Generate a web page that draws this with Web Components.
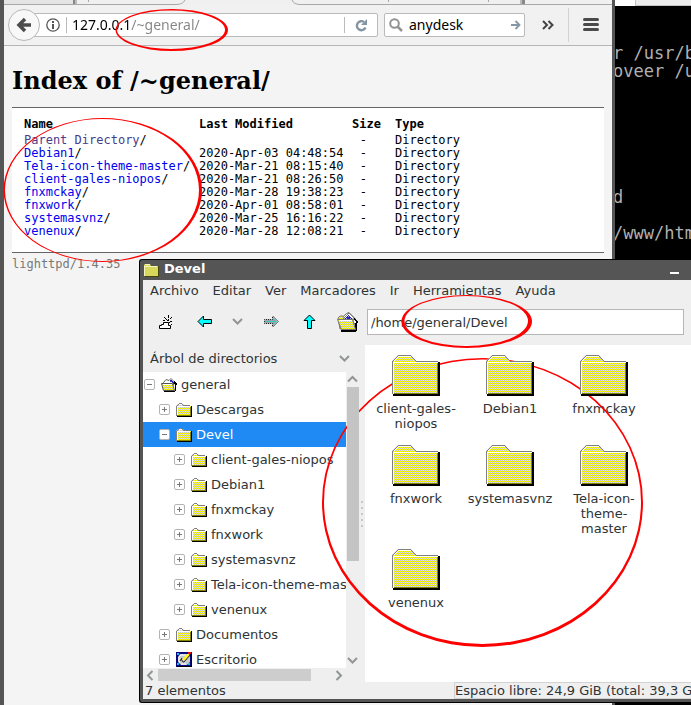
<!DOCTYPE html>
<html lang="es">
<head>
<meta charset="utf-8">
<title>Devel</title>
<style>
html, body { margin: 0; height: 100%; }
body { background: #f4f4f4; font-family: "DejaVu Sans", sans-serif; }
</style>
</head>
<body>
<desk-top>
  <terminal-window></terminal-window>
  <browser-window></browser-window>
  <file-manager></file-manager>
</desk-top>
<script>
const define = (name, html, setup) => customElements.define(name, class extends HTMLElement {
  connectedCallback() {
    if (this.shadowRoot) return;
    const root = this.attachShadow({ mode: 'open' });
    const t = document.createElement('template');
    t.innerHTML = typeof html === 'function' ? html(this) : html;
    root.append(t.content.cloneNode(true));
    if (setup) setup(this, root);
  }
});

/* Two-colour one-pixel checkerboard used by the palette-limited icons. */
const dither = (id, a, b) => `<pattern id="${id}" width="2" height="2" patternUnits="userSpaceOnUse"><rect width="2" height="2" fill="${a}"/><path fill="${b}" d="M0 0h1v1H0zM1 1h1v1H1z"/></pattern>`;
const yellow = `<defs>${dither('y', '#ff0', '#c6c6c6')}</defs>`;
const yellowAlt = `<defs>${dither('y', '#c6c6c6', '#ff0')}</defs>`;

const icons = {
  folder: [49, 42, `${yellowAlt}<path fill="#000" d="M1 39h46V8h1v33H1z M46 7h2v34H1v-2h45z"/><path fill="url(#y)" d="M0 6 6 0h13l5 6h22v33H0z"/><path fill="#848400" d="M1 38h45v1H1zM45 8h1v31h-1z"/><path fill="#fff" d="M1 7h45v1H2v31H1zM6 1h13v1H6zM5 2h1v1H5zM4 3h1v1H4zM3 4h1v1H3zM2 5h1v1H2z"/><path fill="#808080" d="M0 6h1v33H0zM1 5h1v1H1zM2 4h1v1H2zM3 3h1v1H3zM4 2h1v1H4zM5 1h1v1H5zM6 0h13v1H6zM19 1h1v1h-1zM20 2h1v1h-1zM21 3h1v1h-1zM22 4h1v1h-1zM23 5h1v1h-1zM24 6h22v1H24z"/>`],
  small: [16, 14, `${yellow}<path d="M15 3h1v11H1v-1h14z"/><path fill="url(#y)" d="M0 3 2 1h5l2 2h6v10H0z"/><path fill="#848400" d="M1 12h14v1H1zM14 4h1v9h-1z"/><path fill="#fff" d="M1 3h13v1H2v8H1zM3 1h3v1H3z"/><path fill="#808080" d="M0 3h1v10H0zM1 2h1v1H1zM2 1h1v1H2zM3 0h3v1H3zM6 1h1v1H6zM7 2h7v1H7z"/>`],
  title: [15, 14, `<path fill="#45450e" d="M1 3h14v11H1z"/><path fill="#d8d85c" d="M0 2 1 1h5l1 2h7v10H0z"/><path fill="#f4f4c0" d="M0 3h13v1H1v9H0zM1 1h5v1H1z"/>`],
  open: [16, 14, `${yellowAlt}<path d="M3 13h11v1H3zM14 4h1v9h-1z"/><path fill="#fff" stroke="#666" d="M2.500 4.500 5 1.500l3 1 2-2 3 3v3H3z"/><path fill="#2830c0" d="M9 2h2v1h1v1h2v2h-2V5h-1V4H9z"/><path fill="url(#y)" stroke="#555" d="M.5 5.500h11l2 7h-11z"/><path fill="#fff" d="M2 6h9v1H2z"/><path d="M13 3h1v1h1v1h1v2h-1v1h-1V6h-1z"/>`],
  openBig: [21, 20, `${yellow}<path d="M4 18h15v2H4zM18 8h2v11h-2z"/><path fill="#fff" stroke="#666" d="M3 7.500 9.500 1.500 12 .5l6 6v5H3z"/><path fill="url(#y)" stroke="#777" d="M1 6 3 4h3l2 3h9v10H3z"/><path fill="#fff" stroke="#777" d="m6 7 6-6 6 6z"/><path fill="#2020a8" d="M11 3h1v1h1v1h1v1h1v1H8V6h1V5h1V4h1z"/><path fill="#aab0ff" d="M11 4h1v1h-1zM9 6h1v1H9zM13 6h1v1h-1z"/><path fill="url(#y)" stroke="#777" d="M.5 7.500h15l3 10h-14z"/><path fill="#fff" d="M2 8h13v1H2z"/><path d="M17 6h1v1h1v1h1v1h1v2h-1v1h-1v1h-1v-2h1V9h-1V8h-1z"/><path fill="#fff" d="M17 8h1v1h1v2h-2z"/>`],
  desktop: [16, 15, `<path fill="#080880" d="M0 0h16v15H0z"/><path fill="#20b8e8" d="M1 1h2v2H1zM1 11h2v2H1zM12 11h2v2h-2z"/><path fill="#c8c8c8" d="M4 2h8l2 3v5l-3 3H5l-3-3V5z"/><path fill="none" stroke="#fff" d="M4 11 3 9V5l2-2h5M5 12h5"/><path fill="none" stroke="#222" d="m5 7 2 3h1l6-7M4 9l2-3"/><path fill="none" stroke="#ff0" stroke-width="2" d="m7 8 6-6"/><path fill="#e01010" d="M12 0h3v2h-3z"/><path d="M15 1h1v14H1v-1h14z"/>`],
  hill: [14, 15, `<path fill="#fff" stroke="#000" d="M.5 13.500v-3h2v-1h2v-2h5v3h2v3z"/><path fill="#000" d="M9 0h1v3H9zM5 2h1v1H5zM6 3h1v1H6zM7 4h1v1H7zM12 2h1v1h-1zM11 3h1v1h-1zM4 5h2v1H4zM11 6h2v1h-2zM8 5h2v1H8zM10 7h1v1h-1zM12 9h1v1h-1zM9 4h1v1H9z"/>`],
  left: [16, 14, `<path fill="#0ff" stroke="#000" d="M1 6.500 6.500 1v3.500h8v4h-8V12z"/>`],
  right: [16, 14, `<defs>${dither('t', '#40d0d0', '#999')}${dither('g', '#222', '#bbb')}</defs><path fill="url(#t)" stroke="url(#g)" d="M15 6.500 9.500 1v3.500h-8v4h8V12z"/>`],
  up: [14, 16, `<path fill="#0ff" stroke="#000" d="M6.500 1 1 6.500h3.500v8h4v-8H12z"/>`],
  down: [11, 8, `<path fill="none" stroke="#929595" stroke-width="2" d="m1 1 4.500 4.500L10 1"/>`],
  chevUp: [11, 8, `<path fill="none" stroke="#929595" stroke-width="2" d="M1 6.500 5.500 2 10 6.500"/>`],
  chevLeft: [8, 11, `<path fill="none" stroke="#929595" stroke-width="2" d="M6.500 1 2 5.500 6.500 10"/>`],
  chevRight: [8, 11, `<path fill="none" stroke="#929595" stroke-width="2" d="M1.500 1 6 5.500 1.500 10"/>`],
  plus: [11, 11, `<rect x=".5" y=".5" width="10" height="10" rx="1.500" fill="#fff" stroke="#b4b4b4"/><path fill="#777" d="M3 5h5v1H3zM5 3h1v5H5z"/>`],
  minus: [11, 11, `<rect x=".5" y=".5" width="10" height="10" rx="1.500" fill="#fff" stroke="#b4b4b4"/><path fill="#777" d="M3 5h5v1H3z"/>`],
  back: [16, 16, `<path fill="none" stroke="#4c4c4c" stroke-width="3.500" d="M15 8H4M9 2 3 8l6 6"/>`],
  info: [14, 14, `<circle cx="7" cy="7" r="6.200" fill="none" stroke="#555" stroke-width="1.300"/><path fill="#555" d="M6 3h2v2H6zM6 6h2v5H6z"/>`],
  reload: [13, 13, `<path fill="none" stroke="#8496a4" stroke-width="2.400" d="M10.500 8.500A4.500 4.500 0 1 1 9 3"/><path fill="#8496a4" d="M12 0v6H6z"/>`],
  search: [14, 14, `<circle cx="5.500" cy="5.500" r="4.300" fill="none" stroke="#939393" stroke-width="2"/><path stroke="#939393" stroke-width="2.500" d="m8.500 8.500 4.500 4.500"/>`],
  go: [10, 10, `<path fill="none" stroke="#8796a3" stroke-width="1.800" d="M0 5h8M4.500 1l4 4-4 4"/>`],
  more: [12, 10, `<path fill="none" stroke="#444" stroke-width="2" d="m1 1 4 4-4 4M6.500 1l4 4-4 4"/>`],
  burger: [16, 14, `<path stroke="#4a4a4a" stroke-width="3" stroke-linecap="round" d="M1.500 1.500h13M1.500 6.500h13M1.500 11.500h13"/>`]
};
define('ui-icon', el => {
  const [w, h, body] = icons[el.getAttribute('name')];
  return `<style>:host{display:block;flex:none}svg{display:block}</style><svg width="${w}" height="${h}" viewBox="0 0 ${w} ${h}" aria-hidden="true">${body}</svg>`;
});

define('desk-top', `<style>:host{display:block;position:relative;min-height:100%;overflow:hidden;background:#000}</style><slot></slot>`);

define('terminal-window', `<style>
:host{position:absolute;left:613px;right:0;top:0;bottom:0;overflow:hidden;background:#000;color:#b0b0b0}
.tabs{display:flex;height:6px;background:#fff}
.tabs i{width:22px}
.tabs b{flex:1;background:#ececec;border-bottom:1px solid #c4c4c4;border-left:1px solid #c4c4c4;box-sizing:border-box}
pre{margin:0;padding-top:38px;font:17px/18px "DejaVu Sans Mono",monospace}
</style><div class="tabs"><i></i><b></b></div><pre>r /usr/b
oveer /u






d

/www/htm</pre>`);

define('browser-window', `<style>
:host{position:absolute;left:0;right:76px;top:0;bottom:0;box-sizing:border-box;border:solid #555;border-width:0 3px;border-left:4px solid #555;background:#f4f4f4;color:#000;display:flex;flex-direction:column}
.tabs{display:block;height:5px;width:100%;background:#f0f0f0}
form{display:flex;align-items:center;height:40px;background:#f1f1f1;border-bottom:1px solid #b5b5b5;padding-right:13px}
button{border:0;background:none;padding:0;margin:0;display:flex;align-items:center;justify-content:center}
.back{width:32px;height:32px;border:1px solid #b8b8b8;border-radius:50%;background:#f8f8f8;box-sizing:border-box;margin-left:4px;z-index:1}
.box{display:flex;align-items:center;height:24px;box-sizing:border-box;background:#fff;border:1px solid #bababa;border-radius:2px}
.url{flex:1;margin-left:-8px;padding-left:13px}
.search{width:141px;margin-left:6px;padding:0 3px 0 4px}
input{border:0;outline:0;padding:0;margin:0;min-width:0;flex:1;height:20px;font:14px/20px "Noto Sans",sans-serif}
.url input{margin-left:5px;color:transparent;background:linear-gradient(90deg,#000 59px,#858585 59px);-webkit-background-clip:text;background-clip:text}
.line{width:1px;height:16px;background:#bbb;margin-left:6px}
.reload{width:32px}
.search input{margin-left:6px;color:#000}
.more{margin-left:17px}.tall{width:1px;height:34px;background:#d2d2d2;margin:0 14px}
main{padding:0 8px}
h1{font:bold 24px/28px "DejaVu Serif",serif;margin:21px 0 12px}
.list{background:#fff;border:solid #646464;border-width:1px 0;padding:10px 12px 14px}
table{border-collapse:collapse;font:12px/13px "DejaVu Sans Mono",monospace}
th,td{padding:0;text-align:left;font-weight:inherit;white-space:nowrap}
th{font-weight:bold;padding-bottom:3px}
.n{width:175px}.m{width:147px}.s{width:35px;text-align:right}.t{padding-left:14px}
td.s{padding-right:14px;width:21px}
a{color:#00e;text-decoration:none}a.v{color:#4a3c8c}
footer{font:12px/14px "DejaVu Sans Mono",monospace;color:#787878;padding-top:4px}
</style>
<svg class="tabs" viewBox="0 0 608 5" preserveAspectRatio="xMinYMin slice" aria-hidden="true"><path fill="#e4e4e4" d="M0 0h69v4H0z"/><path fill="none" stroke="#a8a8a8" d="M0 4.500h172q7 0 9-4.500M288 0q2 4.500 8 4.500h312M84.500 0v2M384.500 0v2M484.500 0v2"/><path fill="#888" d="M69 0h2v4h-2zM518 0h3v4h-3z"/><path fill="#bbb" d="M71 0h2v4h-2zM516 0h2v4h-2z"/></svg>
<form onsubmit="return false">
<button class="back" type="button" aria-label="Back"><ui-icon name="back"></ui-icon></button>
<div class="box url"><ui-icon name="info"></ui-icon><span class="line"></span><input aria-label="Address" value="127.0.0.1/~general/"><span class="line"></span><button class="reload" type="button" aria-label="Reload"><ui-icon name="reload"></ui-icon></button></div>
<div class="box search"><ui-icon name="search"></ui-icon><input aria-label="Search" value="anydesk"><button aria-label="Go"><ui-icon name="go"></ui-icon></button></div>
<button class="more" type="button" aria-label="More tools"><ui-icon name="more"></ui-icon></button><span class="tall"></span>
<button type="button" aria-label="Menu"><ui-icon name="burger"></ui-icon></button>
</form>
<main><h1>Index of /~general/</h1><div class="list"><table><thead><tr><th class="n">Name</th><th class="m">Last Modified</th><th class="s">Size</th><th class="t">Type</th></tr></thead><tbody></tbody></table></div><footer>lighttpd/1.4.35</footer></main>`,
(el, root) => {
  root.querySelector('tbody').innerHTML = [
    ['Parent Directory', ''], ['Debian1', '2020-Apr-03 04:48:54'], ['Tela-icon-theme-master', '2020-Mar-21 08:15:40'],
    ['client-gales-niopos', '2020-Mar-21 08:26:50'], ['fnxmckay', '2020-Mar-28 19:38:23'], ['fnxwork', '2020-Apr-01 08:58:01'],
    ['systemasvnz', '2020-Mar-25 16:16:22'], ['venenux', '2020-Mar-28 12:08:21']
  ].map(([n, m], i) => `<tr><td class="n"><a href="#"${i ? '' : ' class="v"'}>${n}</a>/</td><td class="m">${m}</td><td class="s">-</td><td class="t">Directory</td></tr>`).join('');
});

define('tree-row', el => {
  const icon = el.getAttribute('icon') || 'small';
  return `<style>
:host{display:flex;align-items:center;height:25px;flex:none;padding-left:calc(1px + 15px * var(--level));white-space:nowrap;box-sizing:border-box}
:host([selected]){background:#1f8af4;color:#fff}
button{border:0;padding:0;background:none;margin-right:6px}
ui-icon{margin-right:4px}button ui-icon{margin:0}
</style><button type="button" aria-label="Toggle"><ui-icon name="${el.hasAttribute('open') ? 'minus' : 'plus'}"></ui-icon></button><ui-icon name="${icon}"></ui-icon><slot></slot>`;
}, el => el.style.setProperty('--level', el.getAttribute('level')));

define('folder-tile', `<style>
:host{display:flex;flex-direction:column;align-items:center;gap:4px;min-height:77px;text-align:center;line-height:15px;white-space:pre-line}
ui-icon{position:relative;z-index:2}
</style><ui-icon name="folder"></ui-icon><span><slot></slot></span>`);

define('file-manager', `<style>
:host{position:absolute;left:139px;right:0;top:259px;bottom:2px;box-sizing:border-box;border:1px solid #000;border-right:0;border-radius:3px 0 0 3px;background:#555;padding:0 0 3px 3px;display:flex;flex-direction:column;font-size:13px;color:#2e3436}
button{border:0;background:none;padding:0;margin:0;font:inherit;color:inherit;display:flex;align-items:center}
header{display:flex;align-items:center;height:20px;color:#fff;font-weight:bold;padding:0 12px 0 1px;line-height:18px}
header span{flex:1;margin-left:5px;padding-bottom:2px}
.min{width:9px;height:2px;background:#fff;margin-top:6px}
.body{flex:1;min-height:0;background:#efefef;display:flex;flex-direction:column}
nav{display:flex;gap:14px;height:20px;padding-left:7px;flex:none}
.tools{display:flex;align-items:center;height:45px;padding:0 7px 1px 16px;flex:none;box-sizing:border-box}
.tools button+button{margin-left:20px}
.tools .a{margin-left:24px}
.tools .b{margin-left:19px}
input{flex:1;min-width:0;height:26px;box-sizing:border-box;border:1px solid #b6b6b6;margin-left:9px;padding:0 3px;font:13px "DejaVu Sans",sans-serif;color:#2e3436;background:#fff;outline:0}
.panes{flex:1;min-height:0;display:flex}
aside{width:216px;display:flex;flex-direction:column;flex:none}
.head{display:flex;align-items:center;justify-content:space-between;height:27px;padding:0 9px 0 7px;flex:none}
.tree{flex:1;min-height:0;display:grid;grid-template:minmax(0,1fr) 14px / minmax(0,1fr) 13px}
.rows{background:#fff;overflow:hidden;display:flex;flex-direction:column}
.v{display:flex;flex-direction:column;align-items:center;padding:3px 0}
.v i{width:12px;flex:none;height:174px;background:#c4c4c4;margin-top:4px;position:relative;z-index:2}
.v ui-icon:last-child{margin-top:auto}
.h{display:flex;align-items:center;padding:0 3px}
.h i{height:12px;flex:none;width:153px;background:#cdcdcd;margin-left:4px}
.h ui-icon:last-child{margin-left:auto}
.grip{width:6px;flex:none;display:flex;flex-direction:column;justify-content:center;align-items:center;gap:4px}
.grip i{width:2px;height:2px;background:#c8c8c8}
.view{flex:1;min-width:0;background:#fff;padding:10px 0 0 4px;display:grid;grid-template-columns:repeat(auto-fill,94px);gap:13px 0;align-content:start}
footer{height:17px;flex:none;display:flex;justify-content:space-between;line-height:17px;padding-left:2px;white-space:nowrap;overflow:hidden}
footer span:last-child{width:237px;box-sizing:border-box;border:1px solid #d2d2d2;border-right:0;line-height:15px;overflow:hidden}
</style>
<header><ui-icon name="title"></ui-icon><span>Devel</span><button class="min" type="button" aria-label="Minimizar"></button></header>
<div class="body">
<nav><button>Archivo</button><button>Editar</button><button>Ver</button><button>Marcadores</button><button>Ir</button><button>Herramientas</button><button>Ayuda</button></nav>
<div class="tools"><button aria-label="Nueva"><ui-icon name="hill"></ui-icon></button><button class="a" aria-label="Atrás"><ui-icon name="left"></ui-icon></button><button class="b" aria-label="Historial"><ui-icon name="down"></ui-icon></button><button aria-label="Adelante"><ui-icon name="right"></ui-icon></button><button class="a" aria-label="Subir"><ui-icon name="up"></ui-icon></button><button aria-label="Inicio"><ui-icon name="openBig"></ui-icon></button><input aria-label="Ruta" value="/home/general/Devel"></div>
<div class="panes">
<aside><div class="head"><span>Árbol de directorios</span><ui-icon name="down"></ui-icon></div>
<div class="tree"><div class="rows">
<tree-row level="0" open icon="open">general</tree-row>
<tree-row level="1">Descargas</tree-row>
<tree-row level="1" open selected>Devel</tree-row>
<tree-row level="2">client-gales-niopos</tree-row>
<tree-row level="2">Debian1</tree-row>
<tree-row level="2">fnxmckay</tree-row>
<tree-row level="2">fnxwork</tree-row>
<tree-row level="2">systemasvnz</tree-row>
<tree-row level="2">Tela-icon-theme-master</tree-row>
<tree-row level="2">venenux</tree-row>
<tree-row level="1">Documentos</tree-row>
<tree-row level="1" icon="desktop">Escritorio</tree-row>
</div><div class="v"><ui-icon name="chevUp"></ui-icon><i></i><ui-icon name="down"></ui-icon></div>
<div class="h"><ui-icon name="chevLeft"></ui-icon><i></i><ui-icon name="chevRight"></ui-icon></div></div></aside>
<div class="grip"><i></i><i></i><i></i><i></i><i></i></div>
<section class="view"><folder-tile>client-gales-
niopos</folder-tile><folder-tile>Debian1</folder-tile><folder-tile>fnxmckay</folder-tile><folder-tile>fnxwork</folder-tile><folder-tile>systemasvnz</folder-tile><folder-tile>Tela-icon-
theme-
master</folder-tile><folder-tile>venenux</folder-tile></section>
</div>
<footer><span>7 elementos</span><span>Espacio libre: 24,9 GiB (total: 39,3 G</span></footer>
</div>`);

/* Hand-marked rings: outer ellipse minus an inner one, given as left, top, right, bottom and the four thicknesses. */
const ring = (l, t, r, b, tl, tt, tr, tb) => {
  const e = (x0, y0, x1, y1) => `M${x0} ${(y0 + y1) / 2}A${(x1 - x0) / 2} ${(y1 - y0) / 2} 0 1 1 ${x1} ${(y0 + y1) / 2}A${(x1 - x0) / 2} ${(y1 - y0) / 2} 0 1 1 ${x0} ${(y0 + y1) / 2}z`;
  return `<path d="${e(l, t, r, b)}${e(l + tl, t + tt, r - tr, b - tb)}"/>`;
};
define('red-marks', `<style>:host{position:absolute;left:0;top:0;z-index:1;pointer-events:none}svg{display:block}</style>
<svg width="691" height="705" viewBox="0 0 691 705" fill="#f00" fill-rule="evenodd" aria-hidden="true">
${ring(115.5, 9, 228, 51, 1.5, 1.5, 3, 2)}${ring(3.5, 118, 202, 262, 1.5, 1, 3, 1)}${ring(401.5, 295, 532, 348, 3, 1, 4, 2)}${ring(322, 358, 643, 647, 2, 1.5, 2, 3)}</svg>`);
document.querySelector('desk-top').append(document.createElement('red-marks'));
</script>
</body>
</html>
